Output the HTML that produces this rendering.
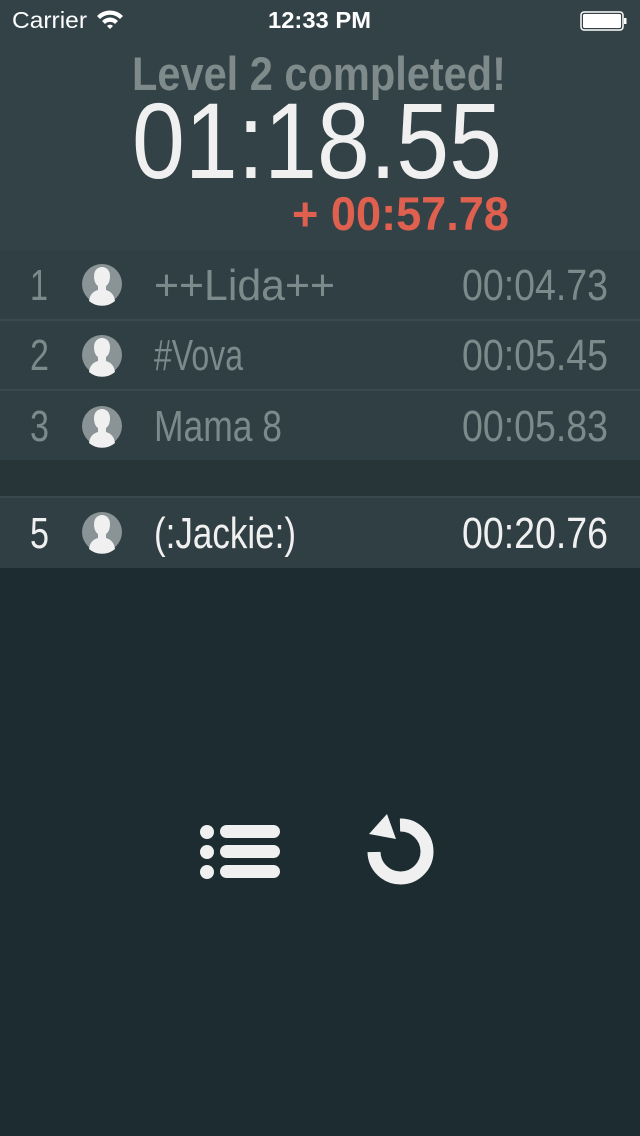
<!DOCTYPE html>
<html><head><meta charset="utf-8"><style>
html,body{margin:0;padding:0;background:#1c2c31;}
svg{display:block}
</style></head><body>
<svg width="640" height="1136" viewBox="0 0 640 1136" xmlns="http://www.w3.org/2000/svg" font-family="Liberation Sans, sans-serif">
<rect x="0" y="0" width="640" height="1136" fill="#1c2c31"/>
<rect x="0" y="0" width="640" height="250" fill="#334247"/>
<rect x="0" y="250" width="640" height="210" fill="#303f44"/>
<rect x="0" y="319" width="640" height="2" fill="#3a494e"/>
<rect x="0" y="389" width="640" height="2" fill="#3a494e"/>
<rect x="0" y="460" width="640" height="37" fill="#273539"/>
<rect x="0" y="497" width="640" height="71" fill="#303f44"/>
<rect x="0" y="496" width="640" height="2" fill="#3a494e"/>
<!-- status bar -->
<text x="12" y="28" font-size="23" fill="#fff" textLength="75" lengthAdjust="spacingAndGlyphs">Carrier</text>
<g fill="#fff">
<path d="M97 16 A18 18 0 0 1 123 16 L120 19 A14 14 0 0 0 100 19 Z"/>
<path d="M102 21 A11 11 0 0 1 118 21 L115 24 A7 7 0 0 0 105 24 Z"/>
<path d="M107 26 A4 4 0 0 1 113 26 L110 29 Z"/>
</g>
<text x="268" y="28" font-size="23" font-weight="bold" fill="#fff" textLength="103" lengthAdjust="spacingAndGlyphs">12:33 PM</text>
<rect x="581" y="12" width="42" height="18" rx="3" fill="none" stroke="#fff" stroke-width="1.5"/>
<rect x="583" y="14" width="38" height="14" rx="1.5" fill="#fff"/>
<rect x="624" y="18" width="2.5" height="6" fill="#fff"/>
<!-- header -->
<text x="132" y="90" font-size="47" font-weight="bold" fill="#7f8a8b" textLength="374" lengthAdjust="spacingAndGlyphs">Level 2 completed!</text>
<text x="132" y="178" font-size="108" fill="#f0f0f0" textLength="370" lengthAdjust="spacingAndGlyphs">01:18.55</text>
<text x="292" y="230" font-size="47" font-weight="bold" fill="#e0604f" textLength="217" lengthAdjust="spacingAndGlyphs">+ 00:57.78</text>
<!-- rows -->
<defs>
<g id="av">
<circle cx="0" cy="0" r="20" fill="#8a9496"/>
<path d="M-13 17 C-12 9 -7 7 -4 6 L-4 2 C-7 0 -8 -4 -8 -8 C-8 -14 -4 -17 0 -17 C4 -17 8 -14 8 -8 C8 -4 7 0 4 2 L4 6 C7 7 12 9 13 17 A20 20 0 0 1 -13 17 Z" fill="#f0f0f0"/>
</g>
</defs>
<g font-size="44" fill="#7d8a8c">
<text x="30" y="300" textLength="18" lengthAdjust="spacingAndGlyphs">1</text>
<use href="#av" x="102" y="284"/>
<text x="154" y="300" textLength="181" lengthAdjust="spacingAndGlyphs">++Lida++</text>
<text x="462" y="300" textLength="146" lengthAdjust="spacingAndGlyphs">00:04.73</text>
<text x="30" y="370" textLength="19" lengthAdjust="spacingAndGlyphs">2</text>
<use href="#av" x="102" y="355"/>
<text x="154" y="370" textLength="89" lengthAdjust="spacingAndGlyphs">#Vova</text>
<text x="462" y="370" textLength="146" lengthAdjust="spacingAndGlyphs">00:05.45</text>
<text x="30" y="441" textLength="19" lengthAdjust="spacingAndGlyphs">3</text>
<use href="#av" x="102" y="426"/>
<text x="154" y="441" textLength="128" lengthAdjust="spacingAndGlyphs">Mama 8</text>
<text x="462" y="441" textLength="146" lengthAdjust="spacingAndGlyphs">00:05.83</text>
</g>
<g font-size="44" fill="#f0f0f0">
<text x="30" y="548" textLength="19" lengthAdjust="spacingAndGlyphs">5</text>
<use href="#av" x="102" y="532"/>
<text x="154" y="548" textLength="142" lengthAdjust="spacingAndGlyphs">(:Jackie:)</text>
<text x="462" y="548" textLength="146" lengthAdjust="spacingAndGlyphs">00:20.76</text>
</g>
<!-- icons -->
<g fill="#f0f0f0">
<circle cx="207" cy="832" r="7"/>
<circle cx="207" cy="852" r="7"/>
<circle cx="207" cy="872" r="7"/>
<rect x="220" y="825" width="60" height="13" rx="6.5"/>
<rect x="220" y="845" width="60" height="13" rx="6.5"/>
<rect x="220" y="865" width="60" height="13" rx="6.5"/>
</g>
<path d="M374 852 A26.5 26.5 0 1 0 400 825" fill="none" stroke="#f0f0f0" stroke-width="13"/>
<path d="M387 814 L369 834 L396 839 Z" fill="#f0f0f0"/>
</svg>
</body></html>
